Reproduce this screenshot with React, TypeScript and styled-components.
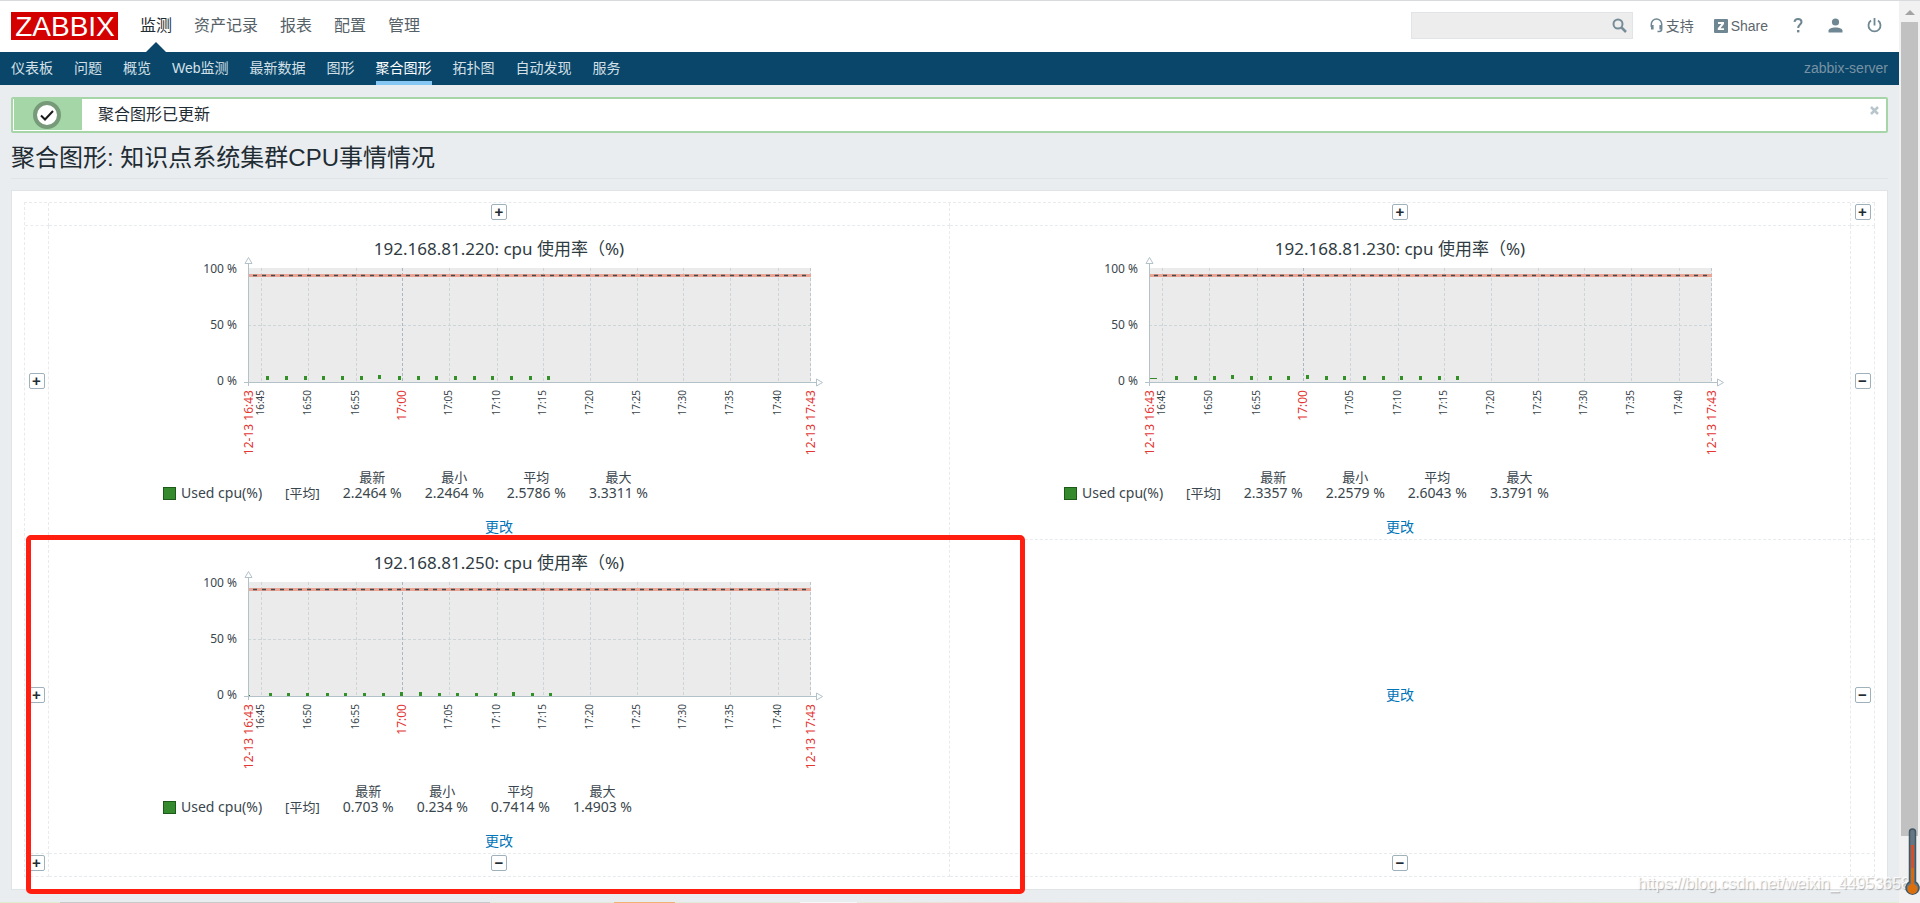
import React from 'react';
import styled, { createGlobalStyle, css } from 'styled-components';

const GlobalStyle = createGlobalStyle`
  *, *::before, *::after { box-sizing: border-box; }
  body {
    margin: 0;
    background: #e9edf0;
    color: #1f2c33;
    font-family: "Liberation Sans", "Noto Sans CJK SC", sans-serif;
    font-size: 14px;
  }
  a { text-decoration: none; }
`;

const Page = styled.div`
  position: relative;
  display: flex;
  min-height: 100vh;
  border-top: 1px solid #d8dade;
  overflow: hidden;
`;

const Main = styled.div`
  flex: 1;
  min-width: 0;
  display: flex;
  flex-direction: column;
`;

/* ---------- header ---------- */

const Header = styled.header`
  display: flex;
  align-items: center;
  height: 51px;
  padding: 0 17px 2px 11px;
  background: #fff;
`;

const Logo = styled.a`
  display: flex;
  align-items: center;
  justify-content: center;
  width: 107px;
  height: 28px;
  margin-right: 22px;
  background: #d40000;
`;

const LogoDrawing = styled.svg`
  display: block;
  flex: none;
  overflow: visible;
`;

const TopMenu = styled.nav`
  display: flex;
  align-self: stretch;
  gap: 22px;
  margin-bottom: -2px;
`;

const TopLink = styled.a<{ $active?: boolean }>`
  position: relative;
  line-height: 50px;
  font-size: 16px;
  color: ${(p) => (p.$active ? '#1f2c33' : '#566067')};
  ${(p) =>
    p.$active &&
    css`
      &::after {
        content: '';
        position: absolute;
        left: 50%;
        bottom: 0;
        margin-left: -10px;
        border: 10px solid transparent;
        border-top: 0;
        border-bottom-color: #0a466a;
      }
    `}
`;

const Tools = styled.div`
  display: flex;
  align-items: center;
  gap: 20px;
  margin-left: auto;
`;

const SearchForm = styled.form`
  display: flex;
  align-items: center;
  width: 222px;
  height: 27px;
  margin-right: -3px;
  padding-right: 5px;
  background: #ededed;
  border: 1px solid #e2e5e7;
`;

const SearchInput = styled.input`
  flex: 1;
  min-width: 0;
  height: 100%;
  padding: 0 6px;
  border: 0;
  outline: 0;
  background: transparent;
  font: inherit;
`;

const PlainButton = styled.button`
  display: flex;
  padding: 0;
  border: 0;
  background: transparent;
  cursor: pointer;
`;

const ToolLink = styled.a`
  display: flex;
  align-items: center;
  gap: 3px;
  line-height: 20px;
  color: #5c666d;
`;

const IconLinks = styled.div`
  display: flex;
  align-items: center;
  gap: 24px;
  margin-left: 4px;
`;

const SubNav = styled.nav`
  display: flex;
  gap: 21px;
  height: 33px;
  padding: 0 11px;
  background: #0a466a;
`;

const SubLink = styled.a<{ $active?: boolean }>`
  line-height: 32px;
  color: ${(p) => (p.$active ? '#fff' : '#d3e0e8')};
  ${(p) => p.$active && 'box-shadow: inset 0 -4px 0 #86c6f2;'}
`;

const ServerName = styled.span`
  margin-left: auto;
  line-height: 32px;
  color: #7892a3;
`;

/* ---------- content ---------- */

const Content = styled.main`
  flex: 1;
  padding: 12px 11px;
`;

const Message = styled.div`
  display: flex;
  align-items: stretch;
  height: 36px;
  padding: 0 0 1px 1px;
  background: #fff;
  border: 2px solid #a6d6a8;
  border-radius: 2px;
`;

const MessageIcon = styled.span`
  display: flex;
  align-items: center;
  justify-content: center;
  width: 68px;
  padding-right: 2px;
  background: #a5d6a7;
`;

const MessageText = styled.span`
  padding-left: 16px;
  font-size: 16px;
  line-height: 31px;
`;

const MessageClose = styled(PlainButton)`
  align-self: flex-start;
  margin: 7px 7px 0 auto;
`;

const Title = styled.h1`
  margin: 0 0 11px;
  padding-top: 5px;
  border-bottom: 1px solid #dfe4e7;
  font-size: 24px;
  font-weight: 400;
  line-height: 40px;
`;

const Panel = styled.section`
  padding: 11px 12px 12px;
  background: #fff;
  border: 1px solid #dfe4e7;
`;

const Screen = styled.div`
  position: relative;
  display: grid;
  grid-template-columns: 24px 1fr 1fr 24px;
  border: dashed #e8ebed;
  border-width: 1px 0 0 1px;
`;

const Cell = styled.div<{ $edge?: boolean }>`
  display: flex;
  flex-direction: column;
  align-items: center;
  justify-content: center;
  min-width: 0;
  min-height: ${(p) => (p.$edge ? '23px' : '0')};
  padding-bottom: 4px;
  border: dashed #e8ebed;
  border-width: 0 1px 1px 0;
`;

const SquareButton = styled.button`
  width: 16px;
  height: 16px;
  padding: 0;
  border: 1px solid #9fb1bb;
  border-radius: 2px;
  background: #fff;
  color: #1f2c33;
  font: bold 15px/12px "Liberation Sans", sans-serif;
  cursor: pointer;
`;

const ChangeLink = styled.a`
  line-height: 16px;
  color: #0275b8;
`;

const Highlight = styled.div`
  position: absolute;
  top: 332px;
  bottom: -17px;
  left: 1px;
  width: 54%;
  border: 5px solid #ff1e10;
  border-radius: 5px;
  pointer-events: none;
`;

/* ---------- graph ---------- */

const Graph = styled.figure`
  width: 672px;
  max-width: 100%;
  margin: 0 0 18px;
  font-family: "Noto Sans", "Noto Sans CJK SC", sans-serif;
  color: #3a464d;
`;

const Plot = styled.svg`
  display: block;
  font-family: inherit;
  overflow: visible;
`;

const Legend = styled.table`
  border-collapse: collapse;
  font-size: 14px;
  line-height: 16px;

  th, td {
    height: 16px;
    padding: 0 23px 0 0;
    font-weight: 400;
    text-align: center;
    white-space: nowrap;
  }
  th { font-size: 13px; }
`;

const Series = styled.div`
  display: flex;
  align-items: center;
  gap: 5px;
`;

const Swatch = styled.span`
  width: 13px;
  height: 13px;
  background: #368a2e;
  border: 1px solid #1c5a18;
`;

const Func = styled.span`
  font-size: 13px;
`;

/* ---------- window edges ---------- */

const Scrollbar = styled.div`
  flex: none;
  display: flex;
  flex-direction: column;
  width: 21px;
  padding: 9px 2px 67px;
  background: #f1f1f1;
`;

const ScrollArrow = styled.svg`
  display: block;
  flex: none;
  align-self: center;
  margin-bottom: 7px;
`;

const ScrollThumb = styled.div`
  flex: 1;
  background: #c1c1c1;
`;

const BottomStrip = styled.div`
  height: 1px;
  background: linear-gradient(
    90deg,
    #dfeed0 0 60px, #c8c9c9 60px 490px, #e2ebda 490px 614px, #f2b071 614px 675px,
    #e2ebda 675px 800px, #f6f8f5 800px 857px, #e8ecd8 857px, #eedad6 1000px,
    #e6ead8 1250px, #ecdcd8 1430px, #e0eed6 1600px
  );
`;

const Watermark = styled.div`
  position: absolute;
  right: 10px;
  bottom: 9px;
  font-size: 16px;
  line-height: 20px;
  color: rgba(255, 255, 255, 0.85);
  text-shadow: 1px 1px 1px rgba(90, 90, 90, 0.45);
`;

const Thermometer = styled.svg`
  position: absolute;
  right: 0;
  bottom: 5px;
`;

const topMenu = ['监测', '资产记录', '报表', '配置', '管理'];
const subMenu = ['仪表板', '问题', '概览', 'Web监测', '最新数据', '图形', '聚合图形', '拓扑图', '自动发现', '服务'];

type GraphData = {
  host: string;
  stats: [string, string][];
  startMark: { width: number; lift: number };
  lift: number;
  dots: number[];
  peaks: number[];
};

const graphs: GraphData[] = [
  {
    host: '192.168.81.220',
    stats: [['最新', '2.2464 %'], ['最小', '2.2464 %'], ['平均', '2.5786 %'], ['最大', '3.3311 %']],
    startMark: { width: 1, lift: 4 },
    lift: 6,
    dots: [19, 38, 57, 75, 94, 113, 131, 151, 170, 188, 207, 226, 244, 263, 282, 300],
    peaks: [131],
  },
  {
    host: '192.168.81.230',
    stats: [['最新', '2.3357 %'], ['最小', '2.2579 %'], ['平均', '2.6043 %'], ['最大', '3.3791 %']],
    startMark: { width: 8, lift: 4 },
    lift: 6,
    dots: [27, 46, 65, 83, 102, 121, 139, 158, 177, 195, 215, 234, 252, 271, 290, 308],
    peaks: [83, 158],
  },
  {
    host: '192.168.81.250',
    stats: [['最新', '0.703 %'], ['最小', '0.234 %'], ['平均', '0.7414 %'], ['最大', '1.4903 %']],
    startMark: { width: 2, lift: 1 },
    lift: 3,
    dots: [22, 40, 59, 79, 97, 116, 135, 153, 172, 191, 209, 228, 247, 265, 284, 302],
    peaks: [153, 172, 265],
  },
];

const AXIS_X = 85;
const AXIS_Y = 156;
const PLOT_TOP = 42;
const PLOT_WIDTH = 563;

const ticks: [string, number][] = [
  ['16:45', 98], ['16:50', 145], ['16:55', 193], ['17:00', 239], ['17:05', 286], ['17:10', 334],
  ['17:15', 380], ['17:20', 427], ['17:25', 474], ['17:30', 520], ['17:35', 567], ['17:40', 615],
];

function VerticalLabel({ x, text, red }: { x: number; text: string; red?: boolean }) {
  return (
    <text
      transform={`translate(${x} 164) rotate(-90)`}
      textAnchor="end"
      fontSize={red ? 12 : 10}
      fill={red ? '#e33734' : '#3a464d'}
    >
      {text}
    </text>
  );
}

function CpuGraph({ data }: { data: GraphData }) {
  return (
    <Graph>
      <Plot width="672" height="243" viewBox="0 0 672 243" role="img" aria-label={data.host}>
        <text x="336" y="29" textAnchor="middle" fontSize="17" fill="#2f3b42">
          {`${data.host}: cpu 使用率（%)`}
        </text>
        <rect x={AXIS_X} y={PLOT_TOP} width={PLOT_WIDTH} height={AXIS_Y - PLOT_TOP} fill="#ebebeb" />
        <g strokeDasharray="3 2" shapeRendering="crispEdges">
          <line x1={AXIS_X} x2={AXIS_X + PLOT_WIDTH} y1="99.5" y2="99.5" stroke="#cdd5d9" />
          {ticks.map(([label, x]) => (
            <line
              key={label}
              x1={x + 0.5}
              x2={x + 0.5}
              y1={PLOT_TOP}
              y2={AXIS_Y}
              stroke={label === '17:00' ? '#a9b9c2' : '#cdd5d9'}
            />
          ))}
          <line x1="647.5" x2="647.5" y1={PLOT_TOP} y2={AXIS_Y} stroke="#bcc8ce" />
        </g>
        <rect x={AXIS_X} y="48" width={PLOT_WIDTH} height="3" fill="#eba595" />
        <line
          x1={AXIS_X + 5}
          x2={AXIS_X + PLOT_WIDTH}
          y1="49.5"
          y2="49.5"
          stroke="#44494e"
          strokeWidth="1.5"
          strokeDasharray="4 5"
        />
        <rect x={AXIS_X} y={AXIS_Y - data.startMark.lift} width={data.startMark.width} height="1" fill="#368a2e" />
        {data.dots.map((d) => (
          <rect
            key={d}
            x={AXIS_X + d - 1}
            y={AXIS_Y - data.lift - (data.peaks.includes(d) ? 1 : 0)}
            width="3"
            height="4"
            fill="#339029"
          />
        ))}
        <g stroke="#b3c1c9" fill="none">
          <path d="M85.5 38V160M81 156.5H653" />
          <path d="M82 37.5h7l-3.500-6zM653.500 153v7l6-3.500z" fill="#fff" />
        </g>
        <g fontSize="12" textAnchor="end" fill="#3a464d">
          <text x="74" y="47">100 %</text>
          <text x="74" y="103">50 %</text>
          <text x="74" y="159">0 %</text>
        </g>
        <VerticalLabel x={90} text="12-13 16:43" red />
        {ticks.map(([label, x]) => (
          <VerticalLabel key={label} x={label === '17:00' ? x + 4 : x + 3} text={label} red={label === '17:00'} />
        ))}
        <VerticalLabel x={652} text="12-13 17:43" red />
      </Plot>
      <Legend>
        <thead>
          <tr>
            <td colSpan={2} />
            {data.stats.map(([name]) => (
              <th key={name} scope="col">{name}</th>
            ))}
          </tr>
        </thead>
        <tbody>
          <tr>
            <td>
              <Series><Swatch />Used cpu(%)</Series>
            </td>
            <td><Func>[平均]</Func></td>
            {data.stats.map(([name, value]) => (
              <td key={name}>{value}</td>
            ))}
          </tr>
        </tbody>
      </Legend>
    </Graph>
  );
}

function GraphCell({ data }: { data: GraphData }) {
  return (
    <Cell>
      <CpuGraph data={data} />
      <ChangeLink href="#change">更改</ChangeLink>
    </Cell>
  );
}

function EdgeCell({ sign }: { sign?: '+' | '−' }) {
  return (
    <Cell $edge>
      {sign && (
        <SquareButton type="button" aria-label={sign === '+' ? '添加' : '移除'}>
          {sign}
        </SquareButton>
      )}
    </Cell>
  );
}

export default function App() {
  return (
    <>
      <GlobalStyle />
      <Page>
        <Main>
          <Header>
            <Logo href="#home" aria-label="ZABBIX">
              <LogoDrawing width="104" height="34" viewBox="0 0 104 34">
                <text x="52" y="27" textAnchor="middle" fontSize="28" fill="#fff">ZABBIX</text>
              </LogoDrawing>
            </Logo>
            <TopMenu aria-label="主菜单">
              {topMenu.map((name, i) => (
                <TopLink key={name} href="#menu" $active={i === 0}>{name}</TopLink>
              ))}
            </TopMenu>
            <Tools>
              <SearchForm role="search">
                <SearchInput type="text" aria-label="搜索" />
                <PlainButton type="button" aria-label="搜索">
                  <svg width="15" height="15" viewBox="0 0 15 15" fill="none" stroke="#768d99">
                    <circle cx="6" cy="6" r="4.500" strokeWidth="2" />
                    <path d="M9.500 9.500L14 14" strokeWidth="2.500" />
                  </svg>
                </PlainButton>
              </SearchForm>
              <ToolLink href="#support">
                <svg width="13" height="15" viewBox="0 0 13 15" fill="none" stroke="#6f8793">
                  <path d="M1.300 9V6.200a5.200 5.200 0 0 1 10.400 0V11c0 1.500-1 2.500-2.500 2.500H7.500" strokeWidth="1.500" />
                  <path d="M2.300 7v4.500M10.700 7v4.500" strokeWidth="2.600" />
                </svg>
                支持
              </ToolLink>
              <ToolLink href="#share">
                <svg width="14" height="14" viewBox="0 0 14 14">
                  <rect width="14" height="14" rx="1" fill="#6f8793" />
                  <path d="M4 3h6v1.900L6.500 9.200H10V11H3.800V9.200L7.400 4.900H4z" fill="#fff" />
                </svg>
                Share
              </ToolLink>
              <IconLinks>
                <ToolLink href="#help" aria-label="帮助">
                  <svg width="12" height="15" viewBox="0 0 12 15">
                    <path d="M2.500 3.800C2.800 2 4.200 1.100 6 1.100c2 0 3.500 1.100 3.500 2.900 0 2.500-3.300 2.800-3.300 6" fill="none" stroke="#6f8793" strokeWidth="2" />
                    <rect x="5" y="12" width="2.400" height="2.400" fill="#6f8793" />
                  </svg>
                </ToolLink>
                <ToolLink href="#profile" aria-label="用户">
                  <svg width="15" height="15" viewBox="0 0 15 15" fill="#6f8793">
                    <circle cx="7.500" cy="4" r="3.600" />
                    <path d="M.5 14.500v-1.700c0-2 3-3.300 7-3.300s7 1.300 7 3.300v1.700z" />
                  </svg>
                </ToolLink>
                <ToolLink href="#logout" aria-label="登出">
                  <svg width="15" height="15" viewBox="0 0 15 15" fill="none" stroke="#6f8793" strokeWidth="1.800">
                    <path d="M4 2.600a6 6 0 1 0 7 0M7.500 0v7.500" />
                  </svg>
                </ToolLink>
              </IconLinks>
            </Tools>
          </Header>

          <SubNav aria-label="监测">
            {subMenu.map((name) => (
              <SubLink key={name} href="#view" $active={name === '聚合图形'}>{name}</SubLink>
            ))}
            <ServerName>zabbix-server</ServerName>
          </SubNav>

          <Content>
            <Message role="status">
              <MessageIcon>
                <svg width="28" height="28" viewBox="0 0 28 28" fill="none">
                  <circle cx="14" cy="14" r="12" fill="#fff" stroke="#779a79" strokeWidth="4" />
                  <path d="M8 14.500l4 4 8-8.500" stroke="#1a1a1a" strokeWidth="2" />
                </svg>
              </MessageIcon>
              <MessageText>聚合图形已更新</MessageText>
              <MessageClose type="button" aria-label="关闭">
                <svg width="9" height="9" viewBox="0 0 9 9">
                  <path d="M1 1l7 7M8 1l-7 7" stroke="#b9c5cc" strokeWidth="2.500" />
                </svg>
              </MessageClose>
            </Message>

            <Title>聚合图形: 知识点系统集群CPU事情情况</Title>

            <Panel>
              <Screen>
                <EdgeCell />
                <EdgeCell sign="+" />
                <EdgeCell sign="+" />
                <EdgeCell sign="+" />

                <EdgeCell sign="+" />
                <GraphCell data={graphs[0]} />
                <GraphCell data={graphs[1]} />
                <EdgeCell sign="−" />

                <EdgeCell sign="+" />
                <GraphCell data={graphs[2]} />
                <Cell>
                  <ChangeLink href="#change">更改</ChangeLink>
                </Cell>
                <EdgeCell sign="−" />

                <EdgeCell sign="+" />
                <EdgeCell sign="−" />
                <EdgeCell sign="−" />
                <EdgeCell />
                <Highlight />
              </Screen>
            </Panel>
          </Content>
          <BottomStrip />
        </Main>

        <Scrollbar aria-hidden="true">
          <ScrollArrow width="10" height="5" viewBox="0 0 10 5">
            <path d="M0 5L5 0l5 5z" fill="#a3a3a3" />
          </ScrollArrow>
          <ScrollThumb />
        </Scrollbar>

        <Watermark>https://blog.csdn.net/weixin_44953658</Watermark>
        <Thermometer width="16" height="70" viewBox="0 0 16 70" aria-hidden="true">
          <path
            d="M5.500 54V4a3 3 0 0 1 6 0v50a6.500 6.500 0 1 1-6 0z"
            fill="#647783"
            stroke="#425663"
            strokeWidth="1.500"
          />
          <rect x="7" y="17" width="3" height="42" fill="#d2502a" />
          <rect x="7" y="40" width="3" height="18" fill="#d8690f" />
          <circle cx="8.500" cy="61" r="5" fill="#dc6f0c" />
        </Thermometer>
      </Page>
    </>
  );
}
